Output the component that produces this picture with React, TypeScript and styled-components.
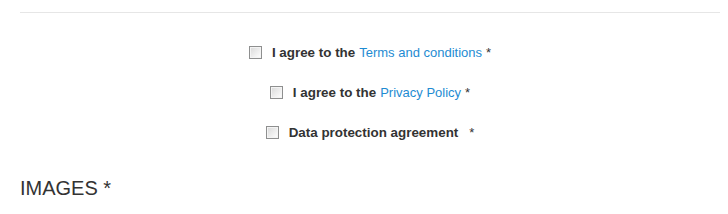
import styled, { createGlobalStyle } from "styled-components";

const GlobalStyle = createGlobalStyle`
  html, body {
    margin: 0;
    padding: 0;
    background: #ffffff;
  }
  body {
    font-family: "Liberation Sans", Arial, sans-serif;
    color: #333333;
  }
`;

const agreements = [
  { id: "terms", prefix: "I agree to the", link: "Terms and conditions" },
  { id: "privacy", prefix: "I agree to the", link: "Privacy Policy" },
  { id: "data", prefix: "Data protection agreement", link: "" },
];

function App() {
  return (
    <>
      <GlobalStyle />
      <Page>
        <Divider />
        <AgreementList>
          {agreements.map((item) => (
            <AgreementRow key={item.id}>
              <CheckBox />
              <Label>
                <Prefix>{item.prefix}</Prefix>
                {item.link && <Link href="#">{item.link}</Link>}
                <Required $spaced={!item.link}>*</Required>
              </Label>
            </AgreementRow>
          ))}
        </AgreementList>
        <SectionTitle>IMAGES *</SectionTitle>
      </Page>
    </>
  );
}

export default App;

const Page = styled.div`
  padding: 12px 8px 0 20px;
`;

const Divider = styled.hr`
  margin: 0;
  border: 0;
  border-top: 1px solid #e6e6e6;
`;

const AgreementList = styled.div`
  display: flex;
  flex-direction: column;
  align-items: center;
  gap: 25px;
  padding-top: 32px;
`;

const AgreementRow = styled.div`
  display: flex;
  align-items: center;
  gap: 10px;
  height: 15px;
`;

const CheckBox = styled.span`
  box-sizing: border-box;
  width: 13px;
  height: 13px;
  border: 1px solid #8e8f8f;
  background: linear-gradient(135deg, #d8d8d8 0%, #ececec 50%, #ffffff 100%);
  box-shadow: inset 0 0 0 1px #f4f4f4;
`;

const Label = styled.span`
  font-size: 13px;
  line-height: 15px;
  white-space: nowrap;
`;

const Prefix = styled.b`
  font-size: 13.4px;
  font-weight: 700;
  color: #333333;
  margin-right: 4px;
`;

const Link = styled.a`
  color: #1e8bd2;
  text-decoration: none;
`;

const Required = styled.span<{ $spaced: boolean }>`
  color: #333333;
  margin-left: ${(p) => (p.$spaced ? "7px" : "4px")};
`;

const SectionTitle = styled.h2`
  margin: 37px 0 0;
  font-size: 20px;
  font-weight: 400;
  color: #333333;
  line-height: 22px;
`;
